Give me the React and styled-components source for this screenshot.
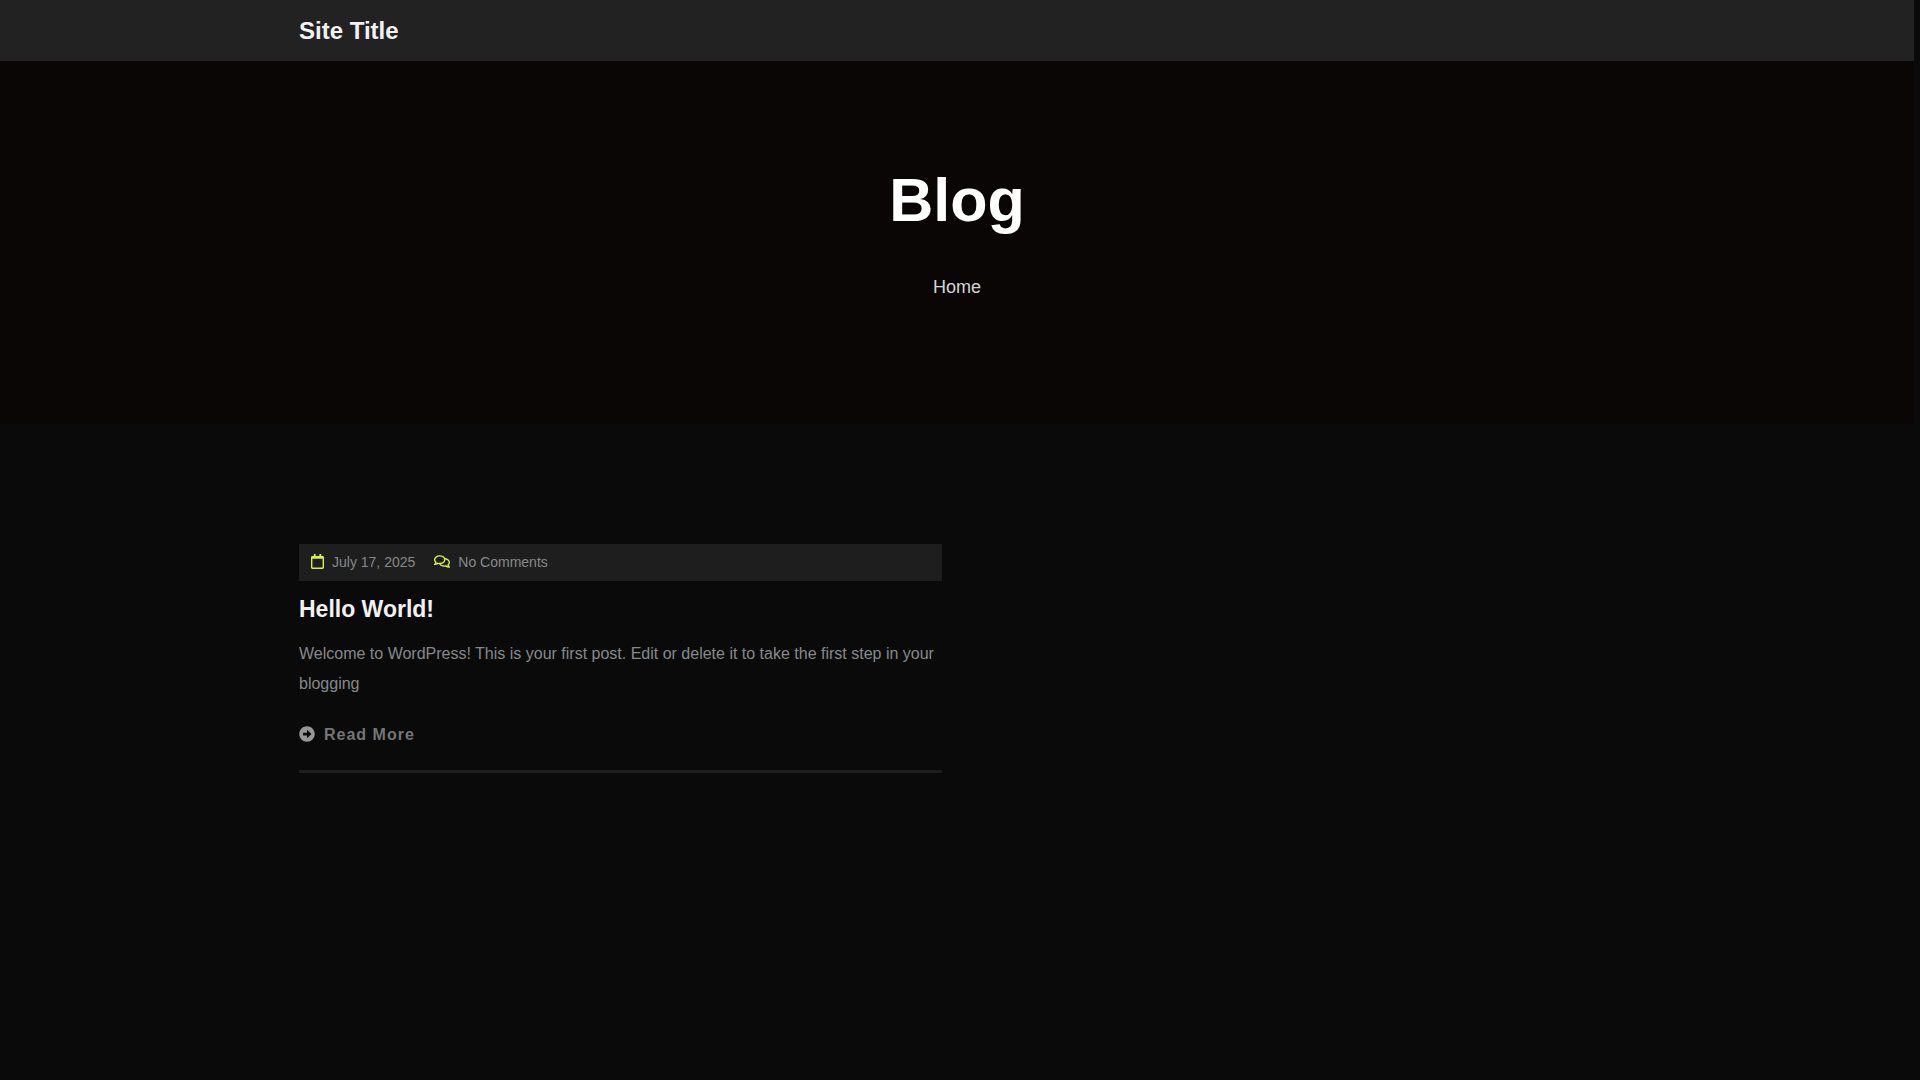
import React from "react";
import styled, { createGlobalStyle } from "styled-components";
import { FaRegCalendar, FaRegComments, FaArrowAltCircleRight } from "react-icons/fa";

const GlobalStyle = createGlobalStyle`
  *, *::before, *::after { box-sizing: border-box; }
  body {
    margin: 0;
    padding-right: 6px;
    background: #0a0a0a;
    color: #87888c;
    font-family: "Liberation Sans", Arial, sans-serif;
    font-size: 16px;
    line-height: 30px;
  }
  a { color: inherit; text-decoration: none; }
  h1, h2, p { margin: 0; }
`;

const Container = styled.div`
  max-width: 1340px;
  margin: 0 auto;
  padding: 0 12px;
`;

const Header = styled.header`
  padding: 16px 0 15px;
  background: #222222;
`;

const SiteTitle = styled.a`
  display: block;
  width: fit-content;
  color: #f2f2f2;
  font-size: 24px;
  font-weight: 700;
`;

const Hero = styled.section`
  display: flex;
  flex-direction: column;
  align-items: center;
  gap: 36px;
  padding: 103px 0 122px;
  background: #0a0605;
  text-align: center;
`;

const HeroTitle = styled.h1`
  color: #ffffff;
  font-size: 61px;
  line-height: 72px;
`;

const Crumb = styled.a`
  color: #d6d6d6;
  font-size: 18px;
`;

const Posts = styled.main`
  display: grid;
  grid-template-columns: repeat(2, minmax(0, 1fr));
  gap: 30px;
  padding: 120px 0;
`;

const Post = styled.article`
  border-bottom: 3px solid #1e1e1e;
  padding-bottom: 20px;
`;

const Meta = styled.div`
  display: flex;
  align-items: center;
  gap: 19px;
  padding: 0 12px;
  background: #1e1e1e;
  font-size: 14px;
  line-height: 37px;
`;

const MetaItem = styled.a`
  display: flex;
  align-items: center;
  gap: 8px;

  svg {
    width: ${(p) => p.$iconWidth}px;
    height: 15px;
    margin-bottom: 2px;
    color: #d3f34b;
  }
`;

const PostTitle = styled.h2`
  margin: 13px 0 15px;
  color: #f2f2f2;
  font-size: 23px;
`;

const ReadMore = styled.a`
  display: flex;
  align-items: center;
  gap: 9px;
  width: fit-content;
  margin-top: 21px;
  color: #757575;
  font-weight: 700;
  letter-spacing: 1px;

  svg {
    margin-bottom: 2px;
    color: #979797;
  }
`;

export default function App() {
  return (
    <>
      <GlobalStyle />
      <Header>
        <Container>
          <SiteTitle href="#">Site Title</SiteTitle>
        </Container>
      </Header>
      <Hero>
        <HeroTitle>Blog</HeroTitle>
        <Crumb href="#">Home</Crumb>
      </Hero>
      <Container>
        <Posts>
          <Post>
            <Meta>
              <MetaItem href="#" $iconWidth={13}><FaRegCalendar aria-hidden />July 17, 2025</MetaItem>
              <MetaItem href="#" $iconWidth={16}><FaRegComments aria-hidden />No Comments</MetaItem>
            </Meta>
            <PostTitle><a href="#">Hello World!</a></PostTitle>
            <p>
              Welcome to WordPress! This is your first post. Edit or delete it to take the first step in your blogging
            </p>
            <ReadMore href="#"><FaArrowAltCircleRight size={16} aria-hidden />Read More</ReadMore>
          </Post>
        </Posts>
      </Container>
    </>
  );
}
